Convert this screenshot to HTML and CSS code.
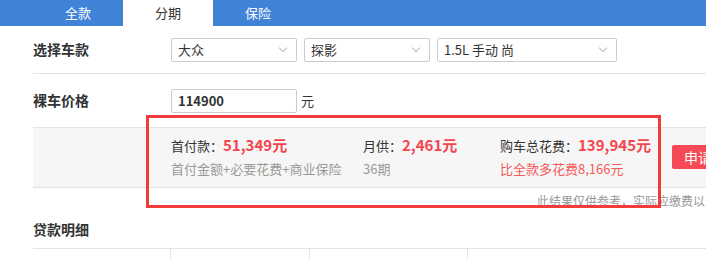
FILE: index.html
```html
<!DOCTYPE html>
<html lang="zh-CN">
<head>
    <meta charset="UTF-8">
    <meta name="viewport" content="width=device-width, initial-scale=1.0">
    <title>购车计算器 - 分期</title>
    <link rel="stylesheet" href="styles.css">
</head>
<body>
    <div class="tabs">
        <div class="tab">全款</div>
        <div class="tab active">分期</div>
        <div class="tab">保险</div>
    </div>

    <div class="calc">
        <div class="row">
            <div class="label">选择车款</div>
            <div class="select w125">大众<span class="arrow"></span></div>
            <div class="select w125">探影<span class="arrow"></span></div>
            <div class="select w180">1.5L 手动 尚<span class="arrow"></span></div>
        </div>

        <div class="row">
            <div class="label">裸车价格</div>
            <div class="input">114900</div>
            <span class="unit">元</span>
        </div>

        <div class="result">
            <div class="col c1">
                <p class="main">首付款：<b>51,349元</b></p>
                <p class="sub">首付金额+必要花费+商业保险</p>
            </div>
            <div class="col c2">
                <p class="main">月供：<b>2,461元</b></p>
                <p class="sub">36期</p>
            </div>
            <div class="col c3">
                <p class="main">购车总花费：<b>139,945元</b></p>
                <p class="sub red">比全款多花费8,166元</p>
            </div>
            <button class="apply">申请贷款</button>
        </div>

        <div class="note">此结果仅供参考，实际应缴费以当地为准</div>

        <h3 class="title">贷款明细</h3>
        <div class="table">
            <div class="cell w137"></div>
            <div class="cell w139"></div>
            <div class="cell w158"></div>
            <div class="cell"></div>
        </div>
    </div>

    <div class="mark"></div>
</body>
</html>
```

FILE: styles.css
```css
html, body {
    overflow: hidden;
}
body {
    margin: 0;
    font-family: "Noto Sans CJK SC", "Liberation Sans", sans-serif;
    font-size: 13px;
    color: #333;
    background: #fff;
    position: relative;
    width: 706px;
    height: 259px;
}
.tabs {
    display: flex;
    height: 26px;
    padding-left: 33px;
    background-color: #4183d7;
}
.tab {
    width: 90px;
    line-height: 26px;
    text-align: center;
    color: #fff;
    font-size: 13px;
}
.tab.active {
    background-color: #fff;
    color: #333;
}
.calc {
    padding-left: 33px;
}
.row {
    display: flex;
    align-items: center;
    border-bottom: 1px solid #e3e3e3;
}
.row:first-child {
    height: 47px;
}
.row:nth-child(2) {
    height: 53px;
}
.label {
    width: 138px;
    margin-top: -2px;
    font-size: 14px;
    font-weight: bold;
    color: #333;
}
.select {
    position: relative;
    box-sizing: border-box;
    height: 24px;
    line-height: 22px;
    margin-right: 7px;
    padding-left: 6px;
    border: 1px solid #ccc;
    border-radius: 2px;
    font-size: 13px;
    color: #333;
}
.w125 { width: 126px; }
.w180 { width: 180px; }
.arrow {
    position: absolute;
    right: 10px;
    top: 6px;
    width: 5px;
    height: 5px;
    border-right: 1px solid #bbb;
    border-bottom: 1px solid #bbb;
    transform: rotate(45deg);
}
.input {
    box-sizing: border-box;
    width: 126px;
    height: 24px;
    line-height: 22px;
    padding-left: 6px;
    border: 1px solid #ccc;
    border-radius: 2px;
    font-weight: bold;
    color: #333;
}
.unit {
    margin-left: 4px;
    font-size: 13px;
}
.result {
    display: flex;
    align-items: center;
    height: 59px;
    background-color: #f6f6f6;
    border-bottom: 1px solid #e3e3e3;
    padding-left: 138px;
}
.col {
    flex-shrink: 0;
    margin-top: -2px;
}
.col p {
    margin: 0;
    white-space: nowrap;
}
.c1 { width: 192px; }
.c2 { width: 137px; }
.c3 { width: 172px; }
.main {
    line-height: 24px;
    color: #333;
}
.main b {
    font-size: 15px;
    color: #f5444f;
}
.sub {
    line-height: 22px;
    color: #999;
}
.sub.red {
    color: #f55a5a;
}
.apply {
    flex-shrink: 0;
    width: 80px;
    height: 24px;
    margin-top: -2px;
    border: none;
    border-radius: 2px;
    background-color: #f54a55;
    color: #fff;
    font-family: inherit;
    font-size: 14px;
    text-align: left;
    padding-left: 12px;
}
.note {
    padding-left: 504px;
    white-space: nowrap;
    line-height: 26px;
    font-size: 12px;
    color: #999;
}
.title {
    margin: 0;
    height: 34px;
    line-height: 30px;
    font-size: 14px;
    font-weight: bold;
    color: #333;
}
.table {
    display: flex;
    height: 30px;
    border-top: 1px solid #e3e3e3;
}
.cell {
    border-right: 1px solid #e3e3e3;
}
.cell:last-child {
    flex: 1;
    border-right: none;
}
.w137 { width: 137px; }
.w139 { width: 138px; }
.w158 { width: 157px; }
.mark {
    position: absolute;
    left: 146px;
    top: 115px;
    width: 509px;
    height: 87px;
    border: 3px solid #f33b3b;
}
```
